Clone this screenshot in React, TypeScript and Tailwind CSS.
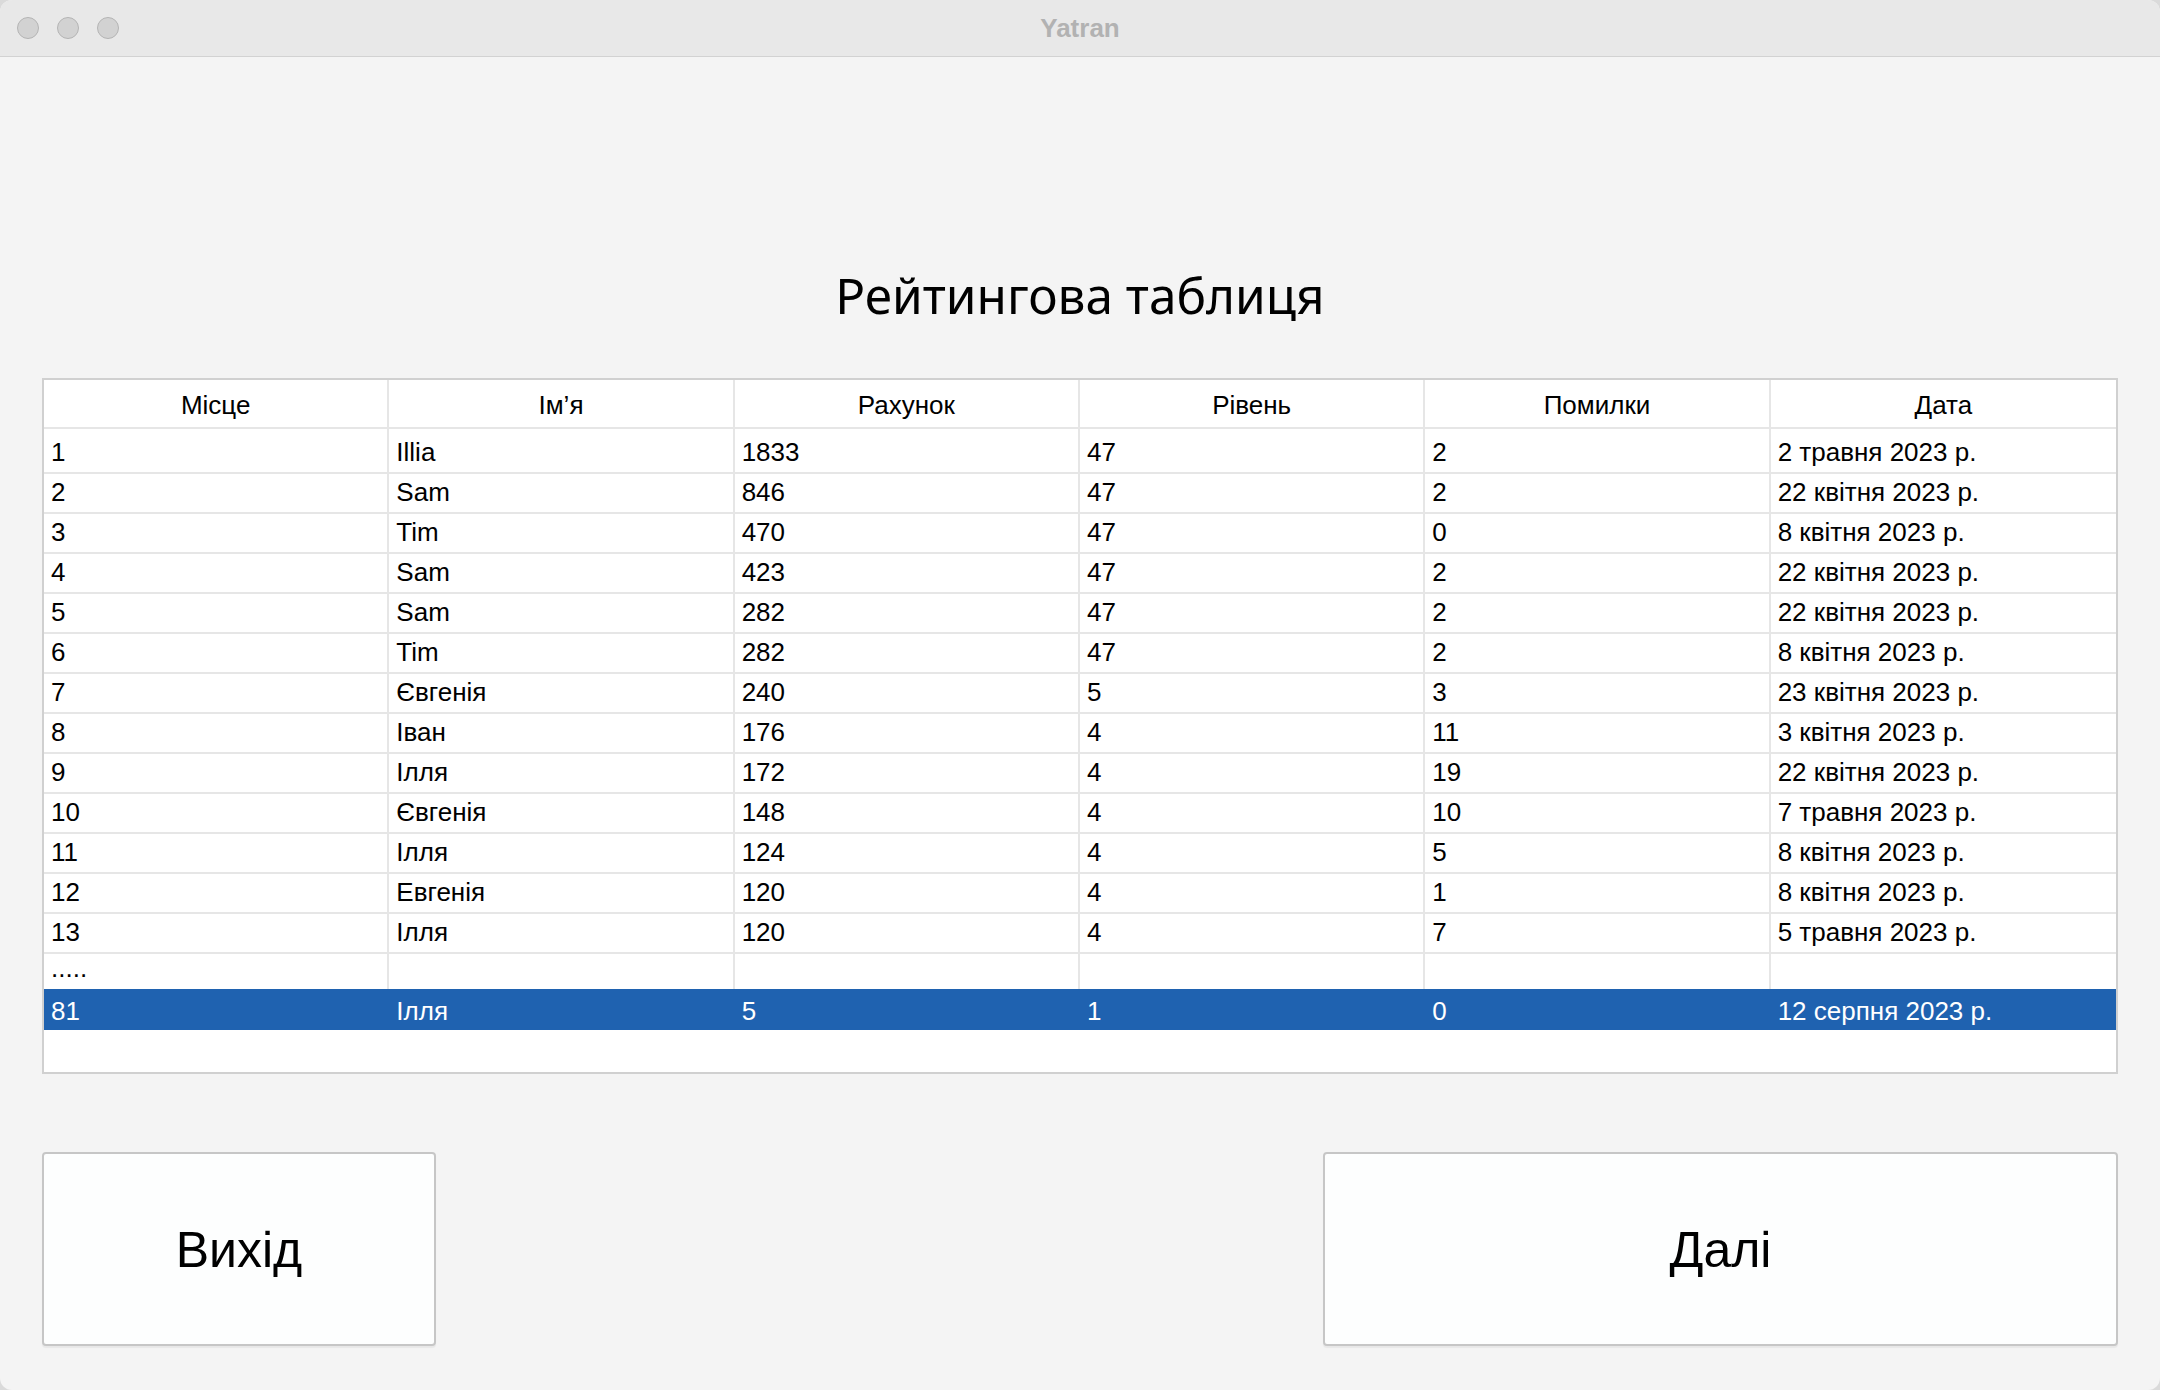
import React from 'react';

const columns = ['Місце', 'Ім’я', 'Рахунок', 'Рівень', 'Помилки', 'Дата'];

const rows: string[][] = [
  ['1', 'Illia', '1833', '47', '2', '2 травня 2023 р.'],
  ['2', 'Sam', '846', '47', '2', '22 квітня 2023 р.'],
  ['3', 'Tim', '470', '47', '0', '8 квітня 2023 р.'],
  ['4', 'Sam', '423', '47', '2', '22 квітня 2023 р.'],
  ['5', 'Sam', '282', '47', '2', '22 квітня 2023 р.'],
  ['6', 'Tim', '282', '47', '2', '8 квітня 2023 р.'],
  ['7', 'Євгенія', '240', '5', '3', '23 квітня 2023 р.'],
  ['8', 'Іван', '176', '4', '11', '3 квітня 2023 р.'],
  ['9', 'Ілля', '172', '4', '19', '22 квітня 2023 р.'],
  ['10', 'Євгенія', '148', '4', '10', '7 травня 2023 р.'],
  ['11', 'Ілля', '124', '4', '5', '8 квітня 2023 р.'],
  ['12', 'Евгенія', '120', '4', '1', '8 квітня 2023 р.'],
  ['13', 'Ілля', '120', '4', '7', '5 травня 2023 р.'],
  ['.....', '', '', '', '', ''],
];

const current = ['81', 'Ілля', '5', '1', '0', '12 серпня 2023 р.'];

function TitleBar() {
  return (
    <div className="relative h-[57px] shrink-0 bg-[#e8e8e8] border-b border-[#d2d2d2] flex items-center">
      <div className="flex gap-[18px] pl-[17px]">
        <span className="w-[22px] h-[22px] rounded-full bg-[#d2d2d2] border border-[#b4b4b4]" />
        <span className="w-[22px] h-[22px] rounded-full bg-[#d2d2d2] border border-[#b4b4b4]" />
        <span className="w-[22px] h-[22px] rounded-full bg-[#d2d2d2] border border-[#b4b4b4]" />
      </div>
      <div className="absolute inset-0 flex items-center justify-center pointer-events-none">
        <span className="text-[26px] font-bold text-[#b2b2b2] font-['Liberation_Sans',Arial,sans-serif]">Yatran</span>
      </div>
    </div>
  );
}

function ScoreTable() {
  return (
    <div className="h-[696px] border-2 border-[#d0d0d0] bg-white flex flex-col font-['Liberation_Sans',Arial,sans-serif] text-[26px] text-black">
      <div className="grid grid-cols-6 h-[49px] shrink-0">
        {columns.map((c, i) => (
          <div
            key={c}
            className={`flex items-center justify-center pt-[3px] border-b-2 border-[#e6e6e6] ${i < 5 ? 'border-r-2' : ''}`}
          >
            {c}
          </div>
        ))}
      </div>
      {rows.map((r, ri) => (
        <div key={ri} className="grid grid-cols-6 h-[40px] shrink-0">
          {r.map((v, i) => (
            <div
              key={i}
              className={`flex pl-[7px] border-b-2 border-[#e6e6e6] ${i < 5 ? 'border-r-2' : ''} ${
                v === '.....' ? 'items-end pb-[1px]' : 'items-center pt-[4px]'
              }`}
            >
              {v}
            </div>
          ))}
        </div>
      ))}
      <div className="grid grid-cols-6 h-[41px] shrink-0 bg-[#1f62b0] text-white">
        {current.map((v, i) => (
          <div key={i} className="flex items-center pl-[7px] pt-[3px]">
            {v}
          </div>
        ))}
      </div>
      <div className="flex-1" />
    </div>
  );
}

function BigButton({ label, width }: { label: string; width: string }) {
  return (
    <button
      className={`${width} h-[194px] bg-[#fdfefe] border-2 border-[#c6c6c6] rounded-[4px] shadow-[0_2px_1px_rgba(0,0,0,0.05)] flex items-center justify-center pt-[3px] text-[50px] text-black font-['Liberation_Sans',Arial,sans-serif]`}
    >
      {label}
    </button>
  );
}

export default function App() {
  return (
    <div className="w-[2160px] h-[1390px] bg-[#dadada]">
      <div className="w-full h-full rounded-[12px] overflow-hidden bg-[#f4f4f4] flex flex-col">
        <TitleBar />
        <div className="flex flex-col px-[42px]">
          <h1 className="mt-[209px] h-[60px] flex items-center justify-center text-[49.5px] leading-none text-black font-['Noto_Sans',sans-serif]">
            Рейтингова таблиця
          </h1>
          <div className="mt-[52px]">
            <ScoreTable />
          </div>
          <div className="mt-[78px] flex justify-between">
            <BigButton label="Вихід" width="w-[394px]" />
            <BigButton label="Далі" width="w-[795px]" />
          </div>
        </div>
      </div>
    </div>
  );
}
